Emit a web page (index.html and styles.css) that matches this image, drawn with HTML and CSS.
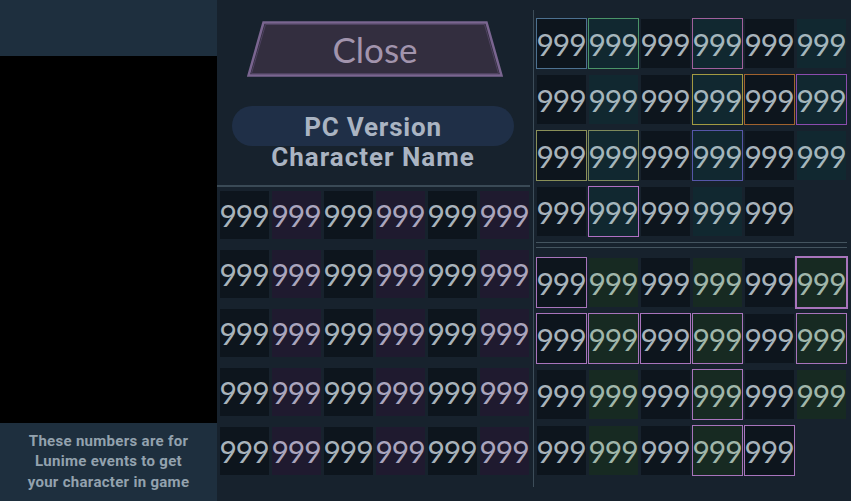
FILE: index.html
```html
<!DOCTYPE html>
<html>
<head>
<meta charset="utf-8">
<link rel="stylesheet" href="styles.css">
</head>
<body>
<div class="app">
  <aside class="side">
    <div class="side-top"></div>
    <div class="side-view"></div>
    <div class="side-note">These numbers are for<br>Lunime events to get<br>your character in game</div>
  </aside>
  <main class="main">
    <section class="mid">
      <div class="close">
        <svg class="close-shape" width="256" height="56" viewBox="0 0 256 56"><polygon points="16.5,1.5 239.5,1.5 254.5,54.5 1.5,54.5" fill="#332e3f" stroke="#7a6590" stroke-width="2.5"/><polygon points="18.5,3.5 237.5,3.5 251.5,52.5 4.5,52.5" fill="none" stroke="#4e4260" stroke-width="1"/></svg>
        <span class="close-label">Close</span>
      </div>
      <div class="pill">PC Version</div>
      <div class="name">Character Name</div>
      <div class="hline"></div>
      <div class="grid mgrid">
        <div class="cell d">999</div><div class="cell p">999</div><div class="cell d">999</div><div class="cell p">999</div><div class="cell d">999</div><div class="cell p">999</div>
        <div class="cell d">999</div><div class="cell p">999</div><div class="cell d">999</div><div class="cell p">999</div><div class="cell d">999</div><div class="cell p">999</div>
        <div class="cell d">999</div><div class="cell p">999</div><div class="cell d">999</div><div class="cell p">999</div><div class="cell d">999</div><div class="cell p">999</div>
        <div class="cell d">999</div><div class="cell p">999</div><div class="cell d">999</div><div class="cell p">999</div><div class="cell d">999</div><div class="cell p">999</div>
        <div class="cell d">999</div><div class="cell p">999</div><div class="cell d">999</div><div class="cell p">999</div><div class="cell d">999</div><div class="cell p">999</div>
      </div>
    </section>
    <div class="vline"></div>
    <section class="right">
      <div class="grid rgrid">
        <div class="cell d o-steel">999</div><div class="cell t o-green">999</div><div class="cell d">999</div><div class="cell t o-pink">999</div><div class="cell d">999</div><div class="cell t">999</div>
        <div class="cell d">999</div><div class="cell t">999</div><div class="cell d">999</div><div class="cell t o-yellow">999</div><div class="cell d o-orange">999</div><div class="cell t o-violet">999</div>
        <div class="cell d o-olive">999</div><div class="cell t o-olive2">999</div><div class="cell d">999</div><div class="cell t o-indigo">999</div><div class="cell d">999</div><div class="cell t">999</div>
        <div class="cell d">999</div><div class="cell t o-orchid">999</div><div class="cell d">999</div><div class="cell t">999</div><div class="cell d">999</div>
      </div>
      <div class="dline"></div>
      <div class="grid rgrid bgrid">
        <div class="cell d o-lilac">999</div><div class="cell g">999</div><div class="cell d">999</div><div class="cell g">999</div><div class="cell d">999</div><div class="cell g o-lilac tall">999</div>
        <div class="cell d o-lilac">999</div><div class="cell g o-lilac">999</div><div class="cell d o-lilac">999</div><div class="cell g o-lilac">999</div><div class="cell d">999</div><div class="cell g o-lilac">999</div>
        <div class="cell d">999</div><div class="cell g">999</div><div class="cell d">999</div><div class="cell g o-lilac">999</div><div class="cell d">999</div><div class="cell g">999</div>
        <div class="cell d">999</div><div class="cell g">999</div><div class="cell d">999</div><div class="cell g o-lilac">999</div><div class="cell d o-lilac">999</div>
      </div>
    </section>
  </main>
</div>
</body>
</html>
```

FILE: styles.css
```css
* { box-sizing: border-box; }
html, body { margin: 0; padding: 0; }
body {
  width: 851px;
  height: 501px;
  overflow: hidden;
  background: #17222d;
  font-family: "Roboto", "Liberation Sans", sans-serif;
}
.app {
  display: flex;
  width: 851px;
  height: 501px;
}
.side {
  width: 217px;
  flex: none;
  display: flex;
  flex-direction: column;
}
.side-top {
  height: 56px;
  background: #1e2f3e;
}
.side-view {
  flex: 1;
  background: #000;
}
.side-note {
  height: 78px;
  background: #1e2f3e;
  color: #93a2ae;
  font-weight: 700;
  font-size: 15px;
  line-height: 20.3px;
  text-align: center;
  padding-top: 8px;
  letter-spacing: 0.3px;
}
.main {
  flex: 1;
  display: flex;
}
.mid {
  width: 316px;
  flex: none;
  display: flex;
  flex-direction: column;
}
.close {
  position: relative;
  width: 256px;
  height: 56px;
  margin: 21px 0 0 30px;
  display: flex;
  align-items: center;
  justify-content: center;
}
.close-shape {
  position: absolute;
  left: 0;
  top: 0;
}
.close-label {
  position: relative;
  font-family: "Lato", sans-serif;
  font-size: 35px;
  color: #a294ad;
  line-height: 1;
  margin-top: 0;
}
.pill {
  width: 282px;
  height: 40px;
  margin: 29px 0 0 15px;
  border-radius: 20px;
  background: #1f2f47;
  color: #aab4c2;
  font-weight: 700;
  font-size: 26px;
  line-height: 42px;
  text-align: center;
  letter-spacing: 0.8px;
}
.name {
  width: 282px;
  margin-left: 15px;
  color: #aab4c2;
  font-weight: 700;
  font-size: 26px;
  line-height: 22px;
  text-align: center;
  letter-spacing: 1px;
}
.hline {
  width: 313px;
  height: 2px;
  margin-top: 17px;
  background: #3a4a56;
}
.grid {
  display: grid;
  grid-template-columns: repeat(6, 49px);
  column-gap: 3px;
}
.mgrid {
  margin: 4px 0 0 3px;
  grid-auto-rows: 48px;
  row-gap: 11px;
}
.cell {
  font-family: "Lato", sans-serif;
  font-size: 30px;
  letter-spacing: -1px;
  display: flex;
  align-items: center;
  justify-content: center;
  overflow: visible;
  white-space: nowrap;
  color: #a8b3bb;
  padding-right: 0;
  text-indent: -1px;
}
.d { background: #0d151d; }
.p { background: #1f1a2f; color: #aaa5bd; }
.t { background: #112830; color: #a4b6bc; }
.g { background: #172a22; color: #a0b6aa; }
.vline {
  width: 1px;
  flex: none;
  margin: 10px 0 14px;
  background: #3d4d59;
}
.right {
  flex: 1;
  padding: 19px 0 0 3px;
  display: flex;
  flex-direction: column;
}
.rgrid {
  grid-auto-rows: 49px;
  row-gap: 7px;
}
.dline {
  width: 311px;
  height: 6px;
  margin: 6px 0 0 -1px;
  border-top: 1px solid #44545f;
  border-bottom: 1px solid #44545f;
}
.bgrid {
  margin-top: 10px;
}
.o-steel { outline: 1px solid #4d7190; }
.o-green { outline: 1px solid #4a9468; }
.o-pink { outline: 1px solid #a0609c; }
.o-yellow { outline: 1px solid #a39a42; }
.o-orange { outline: 1px solid #a0622e; }
.o-violet { outline: 1px solid #8b4cae; }
.o-olive { outline: 1px solid #8a9058; }
.o-olive2 { outline: 1px solid #7e8a5c; }
.o-indigo { outline: 1px solid #5656a8; }
.o-orchid { outline: 1px solid #b070c4; }
.o-lilac { outline: 1px solid #a874bc; }
.tall { outline-width: 2px; }
```
